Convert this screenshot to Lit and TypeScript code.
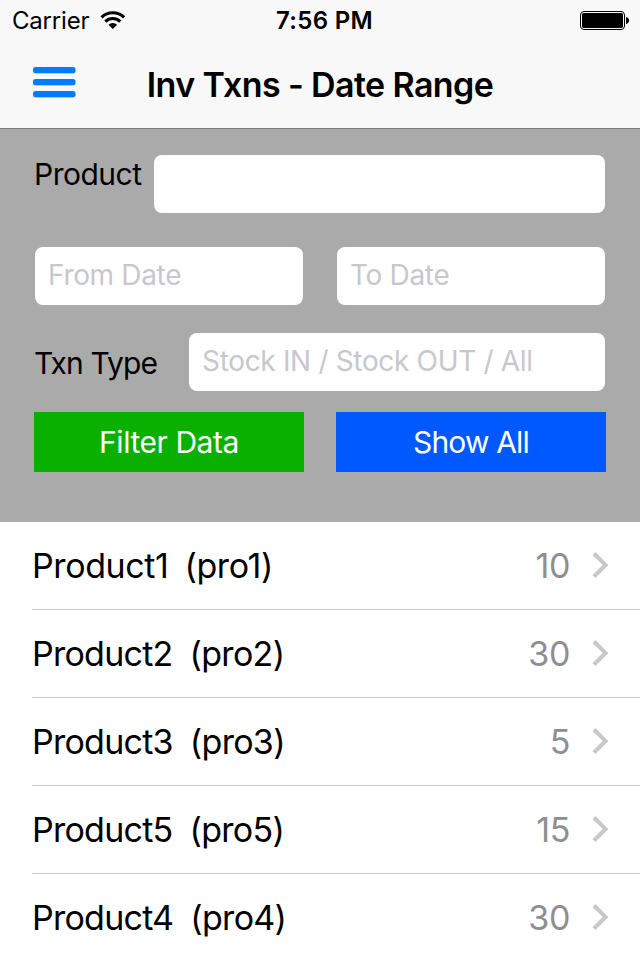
import { LitElement, html, css } from "lit";
import { customElement } from "lit/decorators.js";
import { classMap } from "lit/directives/class-map.js";

interface Item { name: string; code: string; qty: number }

@customElement("app-root")
export class AppRoot extends LitElement {
  static styles = css`
    :host { display: block; width: 640px; height: 960px; overflow: hidden; background: #fff; color: #000; font-family: Inter, "Liberation Sans", sans-serif; }
    * { box-sizing: border-box; }
    .top { height: 129px; background: #f8f8f8; border-bottom: 1px solid #7c7c7c; }
    .status { height: 40px; display: grid; grid-template-columns: 1fr auto 1fr; align-items: start; padding: 0 11px 0 12px; font-size: 24px; line-height: 40px; }
    .left { display: flex; gap: 11px; }
    .carrier { letter-spacing: -0.2px; padding-top: 1px; }
    .time { font-weight: 560; letter-spacing: 0.35px; padding: 1px 0 0 8px; }
    .status svg, .nav svg { display: block; }
    .wifi { margin-top: 11px; }
    .battery { justify-self: end; margin-top: 11px; }
    .nav { height: 88px; display: grid; grid-template-columns: 44px 1fr 44px; padding: 0 32px; align-items: center; }
    .menu { margin-top: -2px; }
    .title { text-align: center; font-size: 34px; font-weight: 600; letter-spacing: -0.6px; }
    .panel { height: 393px; background: #aaa; padding: 26px 35px 0; font-size: 30px; }
    .row { display: flex; justify-content: space-between; }
    .label { line-height: 38px; margin-left: -1px; letter-spacing: -0.5px; }
    .field { height: 58px; border-radius: 8px; background: #fff; color: #c7c7cd; font-size: 28px; line-height: 56px; padding-left: 13px; white-space: nowrap; letter-spacing: -0.33px; }
    .product { width: 451px; }
    .half { width: 268px; }
    .type { width: 416px; }
    .dates { margin-top: 34px; }
    .kind { margin-top: 28px; }
    .kind .label { margin-top: 11px; letter-spacing: -0.9px; }
    .buttons { margin: 21px -1px 0; }
    .btn { width: 270px; height: 60px; line-height: 60px; color: #fff; text-align: center; }
    .green { background: #0ab000; letter-spacing: -0.45px; }
    .blue { background: #0059ff; letter-spacing: -0.85px; }
    .item { height: 88px; margin-left: 32px; padding-right: 31px; border-bottom: 1px solid #c8c7cc; display: flex; align-items: center; font-size: 34px; line-height: 42px; white-space: pre; }
    .item svg { margin-top: -1px; }
    .name, .code, .qty { padding-top: 1px; }
    .name { letter-spacing: -0.75px; }
    .code { letter-spacing: -0.7px; margin-left: 17px; }
    .narrow .name { letter-spacing: -0.4px; }
    .narrow .code { letter-spacing: -0.4px; margin-left: 16px; }
    .qty { margin-left: auto; color: #8e8e93; margin-right: 22px; letter-spacing: -0.4px; }
  `;

  private items: Item[] = [
    { name: "Product1", code: "pro1", qty: 10 },
    { name: "Product2", code: "pro2", qty: 30 },
    { name: "Product3", code: "pro3", qty: 5 },
    { name: "Product5", code: "pro5", qty: 15 },
    { name: "Product4", code: "pro4", qty: 30 },
  ];

  render() {
    return html`
      <header class="top">
        <div class="status">
          <div class="left"><span class="carrier">Carrier</span>
            <svg class="wifi" width="26" height="19" viewBox="0 0 26 19"><g fill="none" stroke="#000" stroke-width="3.1"><path d="M1.5 6.3a16.4 16.4 0 0 1 22.6 0"/><path d="M5.3 10.5a11 11 0 0 1 15 0"/></g><path d="M12.8 18l-4.3-4.2a6.2 6.2 0 0 1 8.6 0z"/></svg>
          </div>
          <span class="time">7:56 PM</span>
          <svg class="battery" width="49" height="19" viewBox="0 0 49 19"><rect x=".5" y=".5" width="44" height="18" rx="3.5" fill="none" stroke="#000"/><rect x="2" y="2" width="41" height="15" rx="1.8"/><path d="M46 6c4 .4 4 6.6 0 7z"/></svg>
        </div>
        <div class="nav">
          <svg class="menu" width="44" height="32" viewBox="0 0 44 32"><g fill="#a9d2ff"><rect x="1" y="1" width="42.5" height="6" rx="3"/><rect x="1" y="13" width="42.5" height="6" rx="3"/><rect x="1" y="25" width="42.5" height="6" rx="3"/></g><g fill="#007aff"><rect x="1" width="42.5" height="6" rx="2.6"/><rect x="1" y="12" width="42.5" height="6" rx="2.6"/><rect x="1" y="24" width="42.5" height="6" rx="2.6"/></g></svg>
          <span class="title">Inv Txns - Date Range</span>
        </div>
      </header>
      <section class="panel">
        <div class="row"><span class="label">Product</span><div class="field product"></div></div>
        <div class="row dates"><div class="field half">From Date</div><div class="field half">To Date</div></div>
        <div class="row kind"><span class="label">Txn Type</span><div class="field type">Stock IN / Stock OUT / All</div></div>
        <div class="row buttons"><div class="btn green">Filter Data</div><div class="btn blue">Show All</div></div>
      </section>
      <main>${this.items.map((i) => html`<div class=${classMap({ item: true, narrow: i.name.endsWith("1") })}><span class="name">${i.name}</span><span class="code">(${i.code})</span><span class="qty">${i.qty}</span><svg width="17" height="26" viewBox="0 0 17 26"><path d="M2 1.5L13.6 13 2 24.5" fill="none" stroke="#c7c7cc" stroke-width="4"/></svg></div>`)}</main>
    `;
  }
}
